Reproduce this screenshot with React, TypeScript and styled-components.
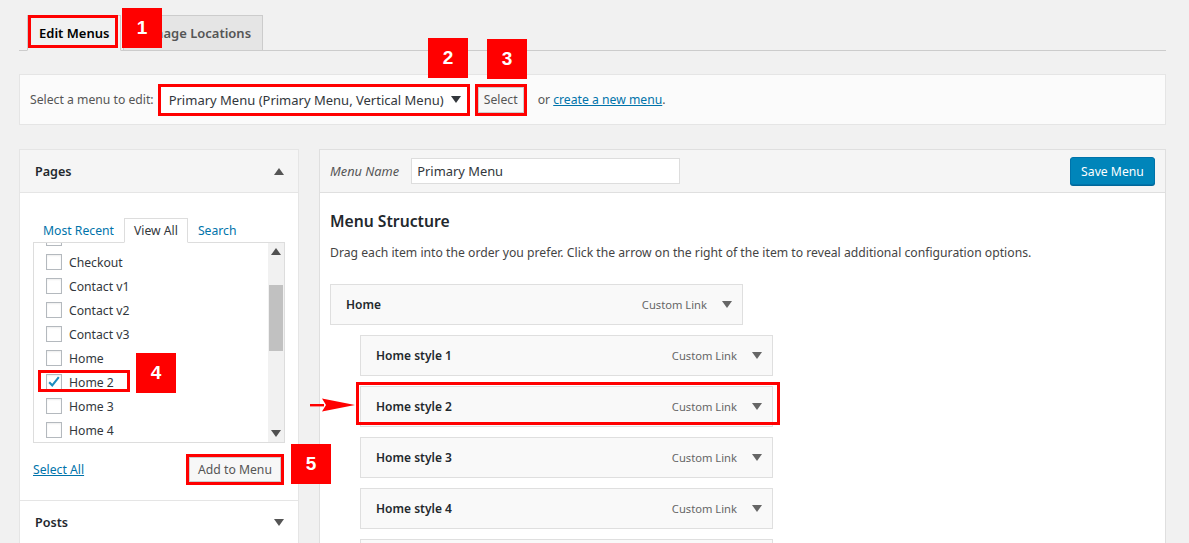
import React from "react";
import styled, { createGlobalStyle } from "styled-components";

const GlobalStyle = createGlobalStyle`
  body {
    margin: 0;
    background: #f1f1f1;
    font-family: "Noto Sans", "Open Sans", sans-serif;
    font-size: 12.2px;
    color: #444;
  }
  * { box-sizing: border-box; }
`;

const Page = styled.div`
  position: relative;
  height: 543px;
  overflow: hidden;
  padding: 15px 23px 0 19px;
`;

/* ---------- annotation overlays ---------- */

const Badge = styled.div<{ $x: number; $y: number }>`
  position: absolute;
  left: ${({ $x }) => $x}px;
  top: ${({ $y }) => $y}px;
  width: 40px;
  height: 40px;
  background: #ff0000;
  color: #fff;
  font-family: "Liberation Sans", Arial, sans-serif;
  font-weight: 700;
  font-size: 19px;
  display: flex;
  align-items: center;
  justify-content: center;
  z-index: 5;
`;

const Mark = styled.span<{ $top: number; $left: number; $width: number; $height: number }>`
  position: absolute;
  top: ${({ $top }) => $top}px;
  left: ${({ $left }) => $left}px;
  width: ${({ $width }) => $width}px;
  height: ${({ $height }) => $height}px;
  border: 3px solid #ff0000;
  pointer-events: none;
  z-index: 4;
`;

const Pointer = styled.svg`
  position: absolute;
  left: 310px;
  top: 398px;
  z-index: 4;
`;

/* ---------- top tabs ---------- */

const TabBar = styled.div`
  display: flex;
  align-items: flex-end;
  gap: 2px;
  height: 36px;
  padding-left: 8px;
  border-bottom: 1px solid #ccc;
`;

const Tab = styled.div<{ $active?: boolean }>`
  position: relative;
  height: 36px;
  margin-bottom: -1px;
  padding: 0 11px;
  display: flex;
  align-items: center;
  font-size: 13px;
  font-weight: 600;
  white-space: nowrap;
  color: ${({ $active }) => ($active ? "#000" : "#555")};
  background: ${({ $active }) => ($active ? "#f1f1f1" : "#e5e5e5")};
  border: 1px solid #ccc;
  border-bottom-color: ${({ $active }) => ($active ? "#f1f1f1" : "#ccc")};
`;

/* ---------- manage bar ---------- */

const ManageBar = styled.div`
  margin-top: 23px;
  height: 51px;
  background: #fbfbfb;
  border: 1px solid #e5e5e5;
  display: flex;
  align-items: center;
  padding: 0 10px;
  color: #555;
  white-space: nowrap;
`;

const MenuSelect = styled.div`
  margin-left: 7px;
  width: 306px;
  height: 26px;
  background: #fff;
  outline: 3px solid #ff0000;
  display: flex;
  align-items: center;
  justify-content: space-between;
  padding: 0 6px 0 8px;
  font-size: 13px;
  color: #32373c;
`;

const Caret = styled.svg<{ $color?: string }>`
  fill: ${({ $color }) => $color || "#32373c"};
  flex: none;
`;

const Button = styled.div<{ $marked?: boolean }>`
  height: 26px;
  padding: 0 10px;
  display: flex;
  align-items: center;
  background: #f7f7f7;
  border: 1px solid #ccc;
  border-radius: 3px;
  box-shadow: 0 1px 0 #ccc;
  color: #555;
  white-space: nowrap;
  outline: ${({ $marked }) => ($marked ? "3px solid #ff0000" : "none")};
`;

const SelectButton = styled(Button)`
  margin-left: 11px;
  width: 46px;
  justify-content: center;
  padding: 0;
  border-radius: 0;
`;

const Link = styled.a`
  color: #0073aa;
  text-decoration: underline;
`;

const OrText = styled.span`
  margin-left: 14px;
`;

/* ---------- columns ---------- */

const Columns = styled.div`
  margin-top: 24px;
  display: flex;
  gap: 20px;
  align-items: flex-start;
`;

const SidePanel = styled.div`
  width: 280px;
  background: #fff;
  border: 1px solid #e5e5e5;
`;

const SectionHead = styled.div<{ $open?: boolean }>`
  height: 43px;
  display: flex;
  align-items: center;
  justify-content: space-between;
  padding: 0 14px 0 15px;
  font-size: 12.6px;
  font-weight: 600;
  color: #23282d;
  background: ${({ $open }) => ($open ? "#f5f5f5" : "#fff")};
  border-bottom: ${({ $open }) => ($open ? "1px solid #e5e5e5" : "none")};
  border-top: ${({ $open }) => ($open ? "none" : "1px solid #e5e5e5")};
`;

const SectionBody = styled.div`
  padding: 25px 13px 18px;
`;

const SubTabs = styled.div`
  display: flex;
  align-items: flex-end;
  height: 24px;
`;

const SubTab = styled.div<{ $active?: boolean }>`
  height: 25px;
  margin-bottom: -1px;
  padding: 0 9px;
  display: flex;
  align-items: center;
  color: ${({ $active }) => ($active ? "#32373c" : "#0073aa")};
  background: ${({ $active }) => ($active ? "#fff" : "transparent")};
  border: 1px solid ${({ $active }) => ($active ? "#ddd" : "transparent")};
  border-bottom-color: ${({ $active }) => ($active ? "#fff" : "transparent")};
  position: relative;
  z-index: 1;
`;

const ListBox = styled.div`
  position: relative;
  height: 201px;
  border: 1px solid #ddd;
  overflow: hidden;
`;

const ListInner = styled.ul`
  list-style: none;
  margin: -17px 0 0;
  padding: 0 12px;
`;

const ListRow = styled.li`
  position: relative;
  height: 24px;
  display: flex;
  align-items: center;
  gap: 7px;
  color: #32373c;
`;

const Check = styled.span`
  width: 16px;
  height: 16px;
  border: 1px solid #b4b9be;
  background: #fff;
  box-shadow: inset 0 1px 2px rgba(0, 0, 0, 0.07);
  display: flex;
  align-items: center;
  justify-content: center;
`;

const Scrollbar = styled.div`
  position: absolute;
  top: 0;
  right: 0;
  bottom: 0;
  width: 16px;
  background: #f1f1f1;
  display: flex;
  flex-direction: column;
  align-items: center;
`;

const ScrollArrow = styled.div`
  height: 17px;
  display: flex;
  align-items: center;
  justify-content: center;
`;

const Thumb = styled.div`
  margin-top: 25px;
  width: 14px;
  height: 66px;
  background: #c1c1c1;
`;

const ScrollFill = styled.div`
  flex: 1;
`;

const ListFooter = styled.div`
  margin-top: 14px;
  display: flex;
  align-items: center;
  justify-content: space-between;
  padding-right: 4px;
`;

const AddButton = styled(Button)`
  width: 92px;
  height: 25px;
  justify-content: center;
  padding: 0;
  border-radius: 0;
`;

/* ---------- menu editor ---------- */

const EditorPanel = styled.div`
  flex: 1;
  height: 420px;
  background: #fff;
  border: 1px solid #dfdfdf;
`;

const EditorHead = styled.div`
  height: 43px;
  display: flex;
  align-items: center;
  padding: 0 10px;
  background: #f5f5f5;
  border-bottom: 1px solid #dfdfdf;
`;

const NameLabel = styled.label`
  font-style: italic;
  font-size: 12.8px;
  color: #555;
`;

const NameInput = styled.div`
  margin-left: 12px;
  width: 269px;
  height: 26px;
  display: flex;
  align-items: center;
  padding: 0 5px;
  background: #fff;
  border: 1px solid #ddd;
  font-size: 12.9px;
  color: #32373c;
`;

const SaveButton = styled.div`
  margin-left: auto;
  width: 85px;
  height: 28px;
  display: flex;
  align-items: center;
  justify-content: center;
  background: #0085ba;
  border: 1px solid #0073aa;
  border-radius: 3px;
  box-shadow: 0 1px 0 #006799;
  color: #fff;
`;

const EditorBody = styled.div`
  padding: 17px 10px 0;
`;

const Title = styled.h3`
  margin: 0;
  font-size: 15.7px;
  font-weight: 600;
  color: #23282d;
  line-height: 23px;
`;

const Description = styled.p`
  margin: 11px 0 23px;
  color: #444;
`;

const Items = styled.div`
  display: flex;
  flex-direction: column;
  gap: 10px;
`;

const MenuItem = styled.div<{ $depth: number }>`
  position: relative;
  width: 413px;
  height: 41px;
  margin-left: ${({ $depth }) => $depth * 30}px;
  display: flex;
  align-items: center;
  padding: 0 10px 0 15px;
  background: #f9f9f9;
  border: 1px solid #dfdfdf;
`;

const ItemTitle = styled.span`
  flex: 1;
  font-size: 12px;
  font-weight: 600;
  color: #23282d;
`;

const ItemType = styled.span`
  font-size: 11.2px;
  color: #666;
  margin-right: 15px;
`;

const Down = ({ color = "#666" }: { color?: string }) => (
  <Caret $color={color} width="10" height="7" viewBox="0 0 10 7">
    <polygon points="0,0 10,0 5,7" />
  </Caret>
);

const Up = ({ color = "#555" }: { color?: string }) => (
  <Caret $color={color} width="10" height="7" viewBox="0 0 10 7">
    <polygon points="0,7 10,7 5,0" />
  </Caret>
);

// first entry is scrolled almost out of view: only its checkbox edge shows
const pages = ["", "Checkout", "Contact v1", "Contact v2", "Contact v3", "Home", "Home 2", "Home 3", "Home 4", "Home 5"];

const menuItems = [
  { title: "Home", depth: 0 },
  { title: "Home style 1", depth: 1 },
  { title: "Home style 2", depth: 1, marked: true },
  { title: "Home style 3", depth: 1 },
  { title: "Home style 4", depth: 1 },
  { title: "Home style 5", depth: 1 },
];

export default function App() {
  return (
    <>
      <GlobalStyle />
      <Page>
        <TabBar>
          <Tab $active>
            Edit Menus
            <Mark $top={-1} $left={0} $width={90} $height={33} />
          </Tab>
          <Tab>Manage Locations</Tab>
        </TabBar>

        <ManageBar>
          Select a menu to edit:
          <MenuSelect>
            Primary Menu (Primary Menu, Vertical Menu)
            <Down color="#32373c" />
          </MenuSelect>
          <SelectButton $marked>Select</SelectButton>
          <OrText>
            or <Link>create a new menu</Link>.
          </OrText>
        </ManageBar>

        <Columns>
          <SidePanel>
            <SectionHead $open>
              Pages
              <Up />
            </SectionHead>
            <SectionBody>
              <SubTabs>
                <SubTab>Most Recent</SubTab>
                <SubTab $active>View All</SubTab>
                <SubTab>Search</SubTab>
              </SubTabs>
              <ListBox>
                <ListInner>
                  {pages.map((p, i) => (
                    <ListRow key={i}>
                      <Check>
                        {p === "Home 2" && (
                          <svg width="16" height="16" viewBox="0 0 16 16">
                            <path d="M2.5 8.2 L6 11.8 L13.5 2.5" fill="none" stroke="#1e8cbe" strokeWidth="2.4" />
                          </svg>
                        )}
                      </Check>
                      {p}
                      {p === "Home 2" && <Mark $top={0} $left={-8} $width={92} $height={22} />}
                    </ListRow>
                  ))}
                </ListInner>
                <Scrollbar>
                  <ScrollArrow>
                    <Up color="#505050" />
                  </ScrollArrow>
                  <Thumb />
                  <ScrollFill />
                  <ScrollArrow>
                    <Down color="#505050" />
                  </ScrollArrow>
                </Scrollbar>
              </ListBox>
              <ListFooter>
                <Link>Select All</Link>
                <AddButton $marked>Add to Menu</AddButton>
              </ListFooter>
            </SectionBody>
            <SectionHead>
              Posts
              <Down color="#555" />
            </SectionHead>
          </SidePanel>

          <EditorPanel>
            <EditorHead>
              <NameLabel>Menu Name</NameLabel>
              <NameInput>Primary Menu</NameInput>
              <SaveButton>Save Menu</SaveButton>
            </EditorHead>
            <EditorBody>
              <Title>Menu Structure</Title>
              <Description>
                Drag each item into the order you prefer. Click the arrow on the right of the item to reveal additional
                configuration options.
              </Description>
              <Items>
                {menuItems.map((m) => (
                  <MenuItem key={m.title} $depth={m.depth}>
                    <ItemTitle>{m.title}</ItemTitle>
                    <ItemType>Custom Link</ItemType>
                    <Down />
                    {m.marked && <Mark $top={-5} $left={-5} $width={424} $height={43} />}
                  </MenuItem>
                ))}
              </Items>
            </EditorBody>
          </EditorPanel>
        </Columns>

        <Badge $x={122} $y={8}>1</Badge>
        <Badge $x={428} $y={38}>2</Badge>
        <Badge $x={487} $y={39}>3</Badge>
        <Badge $x={136} $y={353}>4</Badge>
        <Badge $x={291} $y={444}>5</Badge>
        <Pointer width="46" height="14" viewBox="0 0 46 14">
          <rect x="0" y="6" width="14" height="2.4" fill="#ff0000" />
          <polygon points="12,0.5 45,7 12,13.5 16,7" fill="#ff0000" />
        </Pointer>
      </Page>
    </>
  );
}
